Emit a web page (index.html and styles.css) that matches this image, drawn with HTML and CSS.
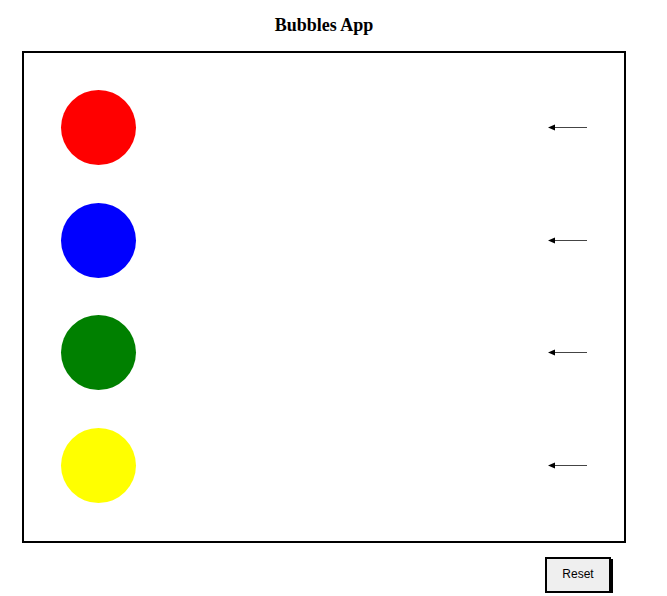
FILE: index.html
```html
<!DOCTYPE html>
<html lang="en">
<head>
    <meta charset="UTF-8">
    <meta name="viewport" content="width=device-width, initial-scale=1.0">
    <title>Bubbles App</title>
    <link rel="stylesheet" href="styles.css">
</head>
<body>

    <div class="app">
        <h1 class="title">Bubbles App</h1>

        <!-- Поле с пузырями -->
        <div class="field">
            <div class="row">
                <div class="bubble red"></div>
                <svg class="arrow" width="39" height="9" viewBox="0 0 39 9">
                    <line x1="6" y1="4.5" x2="39" y2="4.5" stroke="#444" stroke-width="1"/>
                    <polygon points="0,4.5 7,1.5 7,7.5" fill="#000"/>
                </svg>
            </div>
            <div class="row">
                <div class="bubble blue"></div>
                <svg class="arrow" width="39" height="9" viewBox="0 0 39 9">
                    <line x1="6" y1="4.5" x2="39" y2="4.5" stroke="#444" stroke-width="1"/>
                    <polygon points="0,4.5 7,1.5 7,7.5" fill="#000"/>
                </svg>
            </div>
            <div class="row">
                <div class="bubble green"></div>
                <svg class="arrow" width="39" height="9" viewBox="0 0 39 9">
                    <line x1="6" y1="4.5" x2="39" y2="4.5" stroke="#444" stroke-width="1"/>
                    <polygon points="0,4.5 7,1.5 7,7.5" fill="#000"/>
                </svg>
            </div>
            <div class="row">
                <div class="bubble yellow"></div>
                <svg class="arrow" width="39" height="9" viewBox="0 0 39 9">
                    <line x1="6" y1="4.5" x2="39" y2="4.5" stroke="#444" stroke-width="1"/>
                    <polygon points="0,4.5 7,1.5 7,7.5" fill="#000"/>
                </svg>
            </div>
        </div>

        <div class="controls">
            <button id="reset">Reset</button>
        </div>
    </div>

</body>
</html>
```

FILE: styles.css
```css
body {
    margin: 0;
    background: #fff;
    font-family: "Liberation Serif", "Times New Roman", serif;
}

.app {
    width: 604px;
    padding: 14px 0 0 22px;
}

.title {
    margin: 0 0 15px;
    font-size: 18px;
    line-height: 22px;
    text-align: center;
    font-weight: bold;
}

/* Поле с пузырями */
.field {
    box-sizing: border-box;
    width: 604px;
    height: 492px;
    border: 2px solid #000;
    padding: 37px 37px;
    display: flex;
    flex-direction: column;
    gap: 37.7px;
}

.row {
    display: flex;
    align-items: center;
    justify-content: space-between;
}

.bubble {
    width: 75px;
    height: 75px;
    border-radius: 50%;
}

.red { background: #ff0000; }
.blue { background: #0000ff; }
.green { background: #008000; }
.yellow { background: #ffff00; }

.arrow {
    display: block;
}

.controls {
    display: flex;
    justify-content: flex-end;
    padding: 14px 15px 0 0;
}

button {
    box-sizing: border-box;
    width: 66px;
    height: 36px;
    padding: 0 0 3px;
    font-family: "Liberation Sans", Arial, sans-serif;
    font-size: 12px;
    background: #efefef;
    border: 2px solid #000;
    box-shadow: 2px 2px 0 #000;
    cursor: pointer;
}
```
